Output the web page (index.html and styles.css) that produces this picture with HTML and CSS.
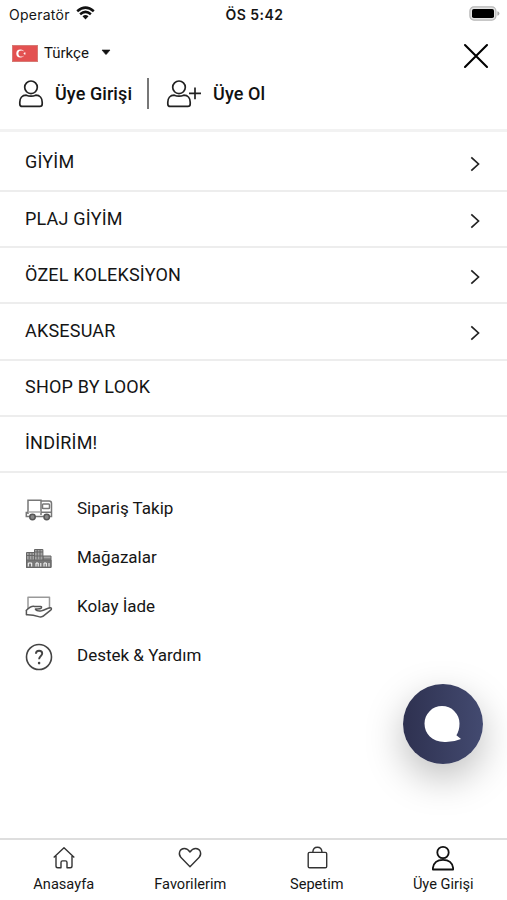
FILE: index.html
```html
<!DOCTYPE html>
<html lang="tr">
<head>
<meta charset="utf-8">
<title>Menü</title>
<link rel="stylesheet" href="styles.css">
</head>
<body>
<div class="app">
  <div class="status">
    <div class="carrier"><span>Operatör</span>
      <svg width="19" height="14" viewBox="0 0 19 14" fill="none" stroke="#111" stroke-width="2.5"><path d="M1.2 5.2Q9.5-2 17.8 5.2M4.1 8.2Q9.5 3.6 14.9 8.2"/><path d="M6.5 10.3Q9.5 7.8 12.5 10.3L9.5 13.4Z" fill="#111" stroke="none"/></svg>
    </div>
    <div class="clock">ÖS 5:42</div>
    <svg class="battery" width="31" height="15" viewBox="0 0 31 15"><rect x=".9" y=".9" width="26" height="13.2" rx="4" fill="#e4e4e4" stroke="#b5b5b5" stroke-width="1.2"/><rect x="3" y="3" width="22" height="9" rx="1.8" fill="#000"/><path d="M28.4 5.2Q30.4 5.8 30.4 7.5T28.4 9.8Z" fill="#aaa"/></svg>
  </div>
  <header class="header">
    <div class="top">
      <div class="language">
        <svg width="26" height="17" viewBox="0 0 26 17"><rect x=".5" y=".5" width="25" height="16" fill="#e35151" stroke="#d77a74"/><circle cx="8.3" cy="8.5" r="4" fill="#fff"/><circle cx="9.5" cy="8.5" r="3.1" fill="#e35151"/><path d="m11 8.5 3-1-1.8 2.6V6.9l1.8 2.6Z" fill="#fff"/></svg>
        <span>Türkçe</span>
        <svg class="caret" width="10" height="7" viewBox="0 0 10 7"><path d="M1 1h8L5.4 5.3q-.4.4-.8 0Z" fill="#111" stroke="#111" stroke-width=".6" stroke-linejoin="round"/></svg>
      </div>
      <svg class="close" width="26" height="26" viewBox="0 0 26 26" fill="none" stroke="#000" stroke-width="2.1" stroke-linecap="round"><path d="M2 2l22 22M24 2L2 24"/></svg>
    </div>
    <div class="account">
      <svg width="26" height="29" viewBox="0 0 26 29" fill="none" stroke="#222" stroke-width="1.7"><circle cx="13" cy="8.3" r="6.3"/><path d="M8.2 16.2Q13 18.2 17.8 16.2C22 16.2 24.2 19.4 24.2 23.2V25q0 2.4-2.4 2.4H4.2Q1.8 27.4 1.8 25V23.2C1.8 19.4 4 16.2 8.2 16.2Z"/></svg>
      <span class="login">Üye Girişi</span>
      <i class="divider"></i>
      <svg width="36" height="29" viewBox="0 0 36 29" fill="none" stroke="#222" stroke-width="1.7"><circle cx="13" cy="8.3" r="6.3"/><path d="M8.2 16.2Q13 18.2 17.8 16.2C22 16.2 24.2 19.4 24.2 23.2V25q0 2.4-2.4 2.4H4.2Q1.8 27.4 1.8 25V23.2C1.8 19.4 4 16.2 8.2 16.2ZM23 14.3h12M29 8.4v11.8"/></svg>
      <span class="signup">Üye Ol</span>
    </div>
  </header>
  <nav class="menu">
    <div class="item first"><span>GİYİM</span><svg width="10" height="16" viewBox="0 0 10 16"><path d="M1.3 1.3L8.5 8l-7.2 6.7"/></svg></div>
    <div class="item"><span>PLAJ GİYİM</span><svg width="10" height="16" viewBox="0 0 10 16"><path d="M1.3 1.3L8.5 8l-7.2 6.7"/></svg></div>
    <div class="item"><span>ÖZEL KOLEKSİYON</span><svg width="10" height="16" viewBox="0 0 10 16"><path d="M1.3 1.3L8.5 8l-7.2 6.7"/></svg></div>
    <div class="item"><span>AKSESUAR</span><svg width="10" height="16" viewBox="0 0 10 16"><path d="M1.3 1.3L8.5 8l-7.2 6.7"/></svg></div>
    <div class="item"><span>SHOP BY LOOK</span></div>
    <div class="item"><span>İNDİRİM!</span></div>
  </nav>
  <div class="links">
    <div class="link"><svg width="28" height="28" viewBox="0 0 28 28" fill="none" stroke="#777" stroke-width="1.5"><path d="M3 18V4.2H16V19M16 5h8.2q2.3 0 2.3 2.4V20.5H1.3v-4H3M9.5 20.5h10M16 16.3h10.3"/><rect x="17.5" y="8" width="7" height="4.6" rx=".8"/><path d="M3 16h13" stroke="#aaa"/><circle cx="7.5" cy="21" r="2.7" fill="#888" stroke="#555"/><circle cx="21.7" cy="21" r="2.7" fill="#888" stroke="#555"/></svg><span>Sipariş Takip</span></div>
    <div class="link"><svg width="28" height="28" viewBox="0 0 28 28" fill="#a5a5a5" stroke="#666" stroke-width="1"><path d="M1.5 7.5h8v15h-8ZM18 11h8v11.5h-8Z"/><path d="M9.5 4.5h8.4v18H9.5Z"/><path d="M1.5 10.5h8M9.5 7h8.4M9.5 11h8.4M18 14h8M4.2 7.5v7M7 7.5v7M12.2 4.5v10M15 4.5v10"/><path d="M1.5 15h24.5v7.5H1.5Z" fill="#777"/><path d="M3.3 21.5v-3.5h3.4v3.5M11 21.5v-3.5h2.2v3.5m2.6 0v-3.5M19 21.5v-3.5h2.3v3.5m2.7 0v-3.5" stroke="#fff" fill="none"/></svg><span>Mağazalar</span></div>
    <div class="link"><svg width="28" height="28" viewBox="0 0 28 28" fill="none" stroke="#555" stroke-width="1.5" stroke-linecap="round" stroke-linejoin="round"><path d="M3 14.4V3.2H24.5V14" stroke="#999"/><path d="M1.2 16.5Q6 11.6 9.5 12.4h6q1.6.3.8 1.6-.8 1.2-5.8.9M10.5 15.5q1.5 2 6 1.3c3.3-.7 5.7-2.8 8.4-3 2-.1 1.8 1.5.8 2.3l-7.8 6.2q-2.2 1-4.2.3-6-2-12.3-1.8V16.5"/></svg><span>Kolay İade</span></div>
    <div class="link"><svg width="28" height="28" viewBox="0 0 28 28" fill="none" stroke="#444" stroke-width="1.6"><circle cx="14" cy="14" r="12.5"/><path d="M10.9 10.8q.1-3 3.2-3t3.1 2.8c0 2.5-3.1 2.4-3.1 5.7" stroke-width="1.9"/><circle cx="14.1" cy="20.1" r="1.3" fill="#444" stroke="none"/></svg><span>Destek &amp; Yardım</span></div>
  </div>
  <button class="chat" aria-label="Sohbet"><svg width="40" height="40" viewBox="0 0 40 40"><path d="M19 2A17.5 17.5 0 0 1 36.5 19.5Q36.5 26.5 33.4 31.2L38 35Q30.5 38.3 21.5 38C9 37.5 1.5 30 1.5 19.5A17.5 17.5 0 0 1 19 2Z" fill="#fff"/></svg></button>
  <nav class="tabs">
    <div class="tab"><svg width="26" height="28" viewBox="0 0 26 28"><path d="M2.7 13.4L13 3.8l10.3 9.6M5 12v10q0 1.8 1.8 1.8H10v-5.3q0-1.6 1.6-1.6h2.8q1.6 0 1.6 1.6v5.3h3.2q1.8 0 1.8-1.8V12"/></svg><span>Anasayfa</span></div>
    <div class="tab"><svg width="26" height="28" viewBox="0 0 26 28"><path d="M13 22.7L4 13.6C.7 9.8 2.7 4.5 7.3 4.5c2.5 0 4.2 1.3 5.7 3.5 1.5-2.2 3.2-3.5 5.7-3.5 4.6 0 6.6 5.3 3.3 9.1Z"/></svg><span>Favorilerim</span></div>
    <div class="tab"><svg width="26" height="28" viewBox="0 0 26 28"><rect x="4.2" y="8.4" width="18.5" height="15.4" rx="1.4"/><path d="M8.8 8.4Q9 3.3 13.4 3.3T18 8.4"/></svg><span>Sepetim</span></div>
    <div class="tab active"><svg width="26" height="28" viewBox="0 0 26 28"><circle cx="13" cy="8.5" r="5.7"/><path d="M2.9 25.5V23.8Q4.1 15.8 13 15.8t10.1 8V25.5Z"/></svg><span>Üye Girişi</span></div>
  </nav>
</div>
</body>
</html>
```
FILE: styles.css
```css
* { box-sizing: border-box; }
body { margin: 0; background: #fff; color: #151515; font-family: Roboto, "Liberation Sans", sans-serif; }
svg { display: block; flex: none; }
span { white-space: nowrap; }
.app { width: 507px; height: 900px; display: flex; flex-direction: column; position: relative; overflow: hidden; }
.status { height: 28px; display: grid; grid-template-columns: 1fr auto 1fr; align-items: center; padding: 0 7px 0 9px; font-family: Inter, sans-serif; font-size: 14px; }
.carrier { display: flex; align-items: center; gap: 6px; letter-spacing: .25px; }
.carrier svg { margin-top: -3px; }
.clock { font-weight: 600; letter-spacing: .45px; }
.battery { justify-self: end; margin-top: -2px; }
.header { height: 103.5px; border-bottom: 3px solid #f2f2f2; }
.top { height: 46px; display: flex; justify-content: space-between; align-items: flex-start; padding: 15px 18px 0 12px; }
.language { display: flex; align-items: center; font-size: 15px; margin-top: 1px; }
.language span { margin-left: 6px; }
.caret { margin-left: 12px; margin-top: -1px; }
.account { height: 38px; display: flex; align-items: center; padding-left: 18px; font-size: 18px; font-weight: 500; letter-spacing: .08px; color: #111; }
.login { margin-left: 11px; }
.divider { width: 2px; height: 31px; background: #777; margin: 0 17px 0 15px; }
.signup { margin-left: 11px; }
.item { height: 56.2px; display: flex; align-items: center; justify-content: space-between; padding: 0 27px 2px 25px; border-bottom: 2px solid #ededed; font-size: 18px; letter-spacing: .2px; }
.first { height: 60.5px; padding-top: 4px; }
.item svg { fill: none; stroke: #222; stroke-width: 1.7; margin-top: 5px; }
.links { padding: 11px 25px; }
.link { height: 49px; display: flex; align-items: center; gap: 24px; font-size: 17px; }
.link span { margin-top: -1px; }
.link svg { margin-top: 3px; }
.chat { position: absolute; left: 403px; top: 684px; width: 80px; height: 80px; border: 0; border-radius: 50%; padding: 0; display: grid; place-items: center; background: linear-gradient(90deg, #2e3150, #434a70); box-shadow: 0 14px 38px rgba(0,0,0,.26); }
.tabs { margin-top: auto; height: 62px; border-top: 2px solid #dedede; display: grid; grid-template-columns: repeat(4, 126.5px); justify-content: center; }
.tab { display: flex; flex-direction: column; align-items: center; padding-top: 4px; font-size: 14.6px; }
.tab svg { fill: none; stroke: #333; stroke-width: 1.4; stroke-linejoin: round; }
.tab span { line-height: 20px; margin-top: 2px; }
.active svg { stroke: #111; stroke-width: 1.8; }
```
